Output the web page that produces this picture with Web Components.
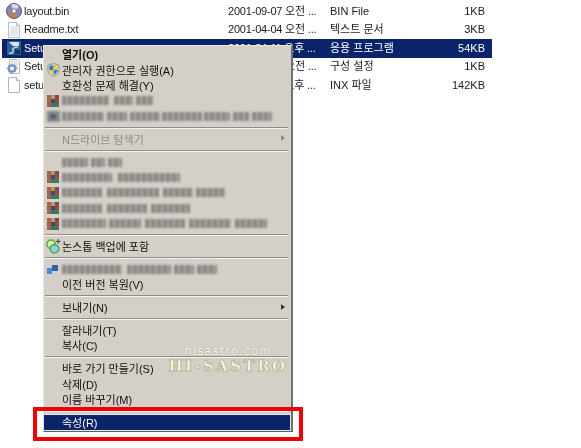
<!DOCTYPE html>
<html lang="ko">
<head>
<meta charset="utf-8">
<title>Setup context menu</title>
<style>
  html, body { margin: 0; background: #fff; }
  body { width: 581px; height: 448px; overflow: hidden; position: relative; font-family: "Liberation Sans", "Noto Sans CJK KR", sans-serif; }
</style>
</head>
<body>
<file-list>
  <file-row name="layout.bin" date="2001-09-07 오전 ..." type="BIN File" size="1KB" icon="disc"></file-row>
  <file-row name="Readme.txt" date="2001-04-04 오전 ..." type="텍스트 문서" size="3KB" icon="text"></file-row>
  <file-row name="Setu" date="2001-04-11 오후 ..." type="응용 프로그램" size="54KB" icon="exe" selected></file-row>
  <file-row name="Setu" date="2001-04-04 오전 ..." type="구성 설정" size="1KB" icon="ini"></file-row>
  <file-row name="setu" date="2001-04-11 오후 ..." type="INX 파일" size="142KB" icon="blank"></file-row>
</file-list>

<context-menu>
  <menu-item strong>열기(O)</menu-item>
  <menu-item icon="shield">관리자 권한으로 실행(A)</menu-item>
  <menu-item>호환성 문제 해결(Y)</menu-item>
  <menu-item icon="rar" blur="47,5,19,3,17"></menu-item>
  <menu-item icon="gray" blur="42,3,20,3,30,2,40,2,26,3,16,3,20"></menu-item>
  <menu-sep></menu-sep>
  <menu-item disabled arrow>N드라이브 탐색기</menu-item>
  <menu-sep></menu-sep>
  <menu-item blur="26,3,14,3,14"></menu-item>
  <menu-item icon="rar" blur="50,6,62"></menu-item>
  <menu-item icon="rar" blur="40,5,52,4,30,3,29"></menu-item>
  <menu-item icon="rar" blur="40,5,40,4,39"></menu-item>
  <menu-item icon="rar" blur="44,3,32,4,40,4,42,4,32"></menu-item>
  <menu-sep></menu-sep>
  <menu-item icon="nonstop">논스톱 백업에 포함</menu-item>
  <menu-sep></menu-sep>
  <menu-item icon="blue" blur="60,5,44,3,20,3,20"></menu-item>
  <menu-item>이전 버전 복원(V)</menu-item>
  <menu-sep></menu-sep>
  <menu-item arrow>보내기(N)</menu-item>
  <menu-sep></menu-sep>
  <menu-item>잘라내기(T)</menu-item>
  <menu-item>복사(C)</menu-item>
  <menu-sep></menu-sep>
  <menu-item>바로 가기 만들기(S)</menu-item>
  <menu-item>삭제(D)</menu-item>
  <menu-item>이름 바꾸기(M)</menu-item>
  <menu-sep></menu-sep>
  <menu-item active>속성(R)</menu-item>
</context-menu>

<site-watermark></site-watermark>
<red-callout></red-callout>

<script>
const ICONS = {
  disc: `<svg width="16" height="16" viewBox="0 0 16 16"><circle cx="8" cy="8" r="7.5" fill="#8f86b8" stroke="#55556a"/><path d="M8 8 2.5 12.5a7 7 0 0 0 8 1.8z" fill="#c9803c"/><path d="M8 8 13 3.5A7 7 0 0 0 5 1.7z" fill="#dcd8ee"/><circle cx="8" cy="8" r="2.2" fill="#fff" stroke="#777"/></svg>`,
  text: `<svg width="16" height="16" viewBox="0 0 16 16"><path d="M2.5.5h8l3 3v12h-11z" fill="#fff" stroke="#b4bcc6"/><path d="M4 5h8M4 7h8M4 9h8M4 11h8M4 13h8" stroke="#c4d0dc"/><path d="M10.5.5v3h3" fill="#e8ecf0" stroke="#b4bcc6"/></svg>`,
  exe: `<svg width="16" height="16" viewBox="0 0 16 16"><rect x="1" y="1" width="14" height="14" fill="#2c5f9a"/><path d="M3 2h10v4H7z" fill="#d9e6ee"/><path d="M3 13c3 1 5-1 4-3s2-3 5-3" fill="none" stroke="#a8dcec" stroke-width="1.5"/><path d="M9 10h5v4H9z" fill="#10305e"/></svg>`,
  ini: `<svg width="16" height="16" viewBox="0 0 16 16"><path d="M3.5.5h8l2 2v12h-10z" fill="#f8f8f8" stroke="#b4b8c4"/><path d="M5 3h6M8 5h4M10 7h2M11 9h1" stroke="#c4ccd8"/><circle cx="6" cy="9.5" r="3.2" fill="none" stroke="#6f93c4" stroke-width="2.2"/><path d="M6 4.5v2M6 12.500v2M1 9.500h2M9 9.500h2M2.500 6l1.500 1.500M8 11.500l1.500 1.500M2.500 13 4 11.500M8 7.500 9.500 6" stroke="#6f93c4" stroke-width="1.3"/></svg>`,
  blank: `<svg width="16" height="16" viewBox="0 0 16 16"><path d="M2.5.5h8l3 3v12h-11z" fill="#fff" stroke="#b0b6be"/><path d="M10.5.5v3h3" fill="#eee" stroke="#b0b6be"/></svg>`,
  shield: `<svg width="13" height="14" viewBox="0 0 14 15"><path d="M7 .5 13 2.5v5c0 3.500-3 6-6 7-3-1-6-3.500-6-7v-5z" fill="#d9d9d9" stroke="#8a8a8a"/><path d="M7 2v5.500H2.500V3.500z" fill="#2f78c8"/><path d="M7 2l4.500 1.500v4H7z" fill="#f2c83a"/><path d="M7 7.500h4.500c0 2.500-2 4.500-4.500 5.500z" fill="#2f78c8"/><path d="M7 7.500v5.500c-2.500-1-4.500-3-4.500-5.500z" fill="#f2c83a"/></svg>`,
  rar: `<svg width="12" height="12" viewBox="0 0 12 12" style="filter:blur(.7px)"><rect width="4" height="12" fill="#a8624a"/><rect x="4" width="4" height="4" fill="#b89a50"/><rect x="8" width="4" height="4" fill="#7c4a50"/><rect x="4" y="4" width="4" height="4" fill="#2e4f86"/><rect x="8" y="4" width="4" height="4" fill="#a8423c"/><rect x="4" y="8" width="8" height="4" fill="#3c7a5c"/></svg>`,
  gray: `<svg width="13" height="11" viewBox="0 0 13 11" style="filter:blur(.8px)"><rect width="13" height="11" fill="#8a8a8c"/><rect x="3" y="3" width="6" height="5" fill="#58606c"/></svg>`,
  nonstop: `<svg width="15" height="15" viewBox="0 0 16 16"><circle cx="5.5" cy="5.5" r="4.5" fill="#dcecb0" stroke="#5aa83a" stroke-width="1.6"/><circle cx="9" cy="10.5" r="4.5" fill="#8ed0ec" stroke="#4aa84a" stroke-width="1.6"/><path d="M13 0v5M10.500 2.500h5" stroke="#333"/></svg>`,
  blue: `<svg width="11" height="9" viewBox="0 0 11 9" style="filter:blur(.5px)"><path d="M0 3h5v6H0z" fill="#4a88d8"/><path d="M5 0h6v6H5z" fill="#2c62b8"/></svg>`
};

class FileList extends HTMLElement {
  constructor() {
    super();
    this.attachShadow({ mode: 'open' });
    this.shadowRoot.innerHTML = `
      <style>
        :host { display: flex; flex-direction: column; width: 490px; margin: 2px 0 0 2px; filter: blur(.35px); }
      </style>
      <slot></slot>`;
  }
}

class FileRow extends HTMLElement {
  constructor() {
    super();
    this.attachShadow({ mode: 'open' });
  }

  connectedCallback() {
    const get = (n) => this.getAttribute(n) || '';
    this.shadowRoot.innerHTML = `
      <style>
        :host {
          display: grid;
          grid-template-columns: 22px 204px 102px 84px 74px;
          height: 18.5px;
          align-items: center;
          font-size: 11px;
          line-height: 15px;
          color: #1a1a1a;
          white-space: nowrap;
        }
        :host([selected]) { background: #0a246a; color: #fff; }
        .icon { display: flex; padding-left: 4px; }
        .tight { letter-spacing: -.2px; }
        .size { text-align: right; padding-right: 3px; }
      </style>
      <span class="icon">${ICONS[get('icon')] || ''}</span>
      <span class="tight">${get('name')}</span>
      <span class="tight">${get('date')}</span>
      <span>${get('type')}</span>
      <span class="size">${get('size')}</span>`;
  }
}

class ContextMenu extends HTMLElement {
  constructor() {
    super();
    this.attachShadow({ mode: 'open' });
    this.shadowRoot.innerHTML = `
      <style>
        :host {
          position: absolute;
          left: 43px;
          top: 45px;
          width: 250px;
          box-sizing: border-box;
          display: flex;
          flex-direction: column;
          padding: 1px 1px 1px 0;
          background: #d4d0c8;
          border: 1px solid;
          border-color: #e8e6e0 #707070 #606060 #e8e6e0;
          border-right-width: 2px;
          font-size: 11px;
          color: #111;
          filter: blur(.35px);
        }
      </style>
      <slot></slot>`;
  }
}

class MenuItem extends HTMLElement {
  constructor() {
    super();
    this.attachShadow({ mode: 'open' });
  }

  connectedCallback() {
    const icon = this.getAttribute('icon');
    const blur = this.getAttribute('blur');
    const bars = blur ? blur.split(',').map((w, i) =>
      `<i style="width:${w}px;opacity:${i % 2 ? 0 : 1}"></i>`).join('') : '';
    this.shadowRoot.innerHTML = `
      <style>
        :host {
          display: flex;
          align-items: center;
          height: 15.4px;
          line-height: 15px;
          flex: none;
          white-space: nowrap;
          position: relative;
        }
        :host([strong]) { font-weight: 700; }
        :host([disabled]) { color: #8d8b86; }
        :host([active]) { background: #0a246a; color: #fff; box-shadow: 0 0 0 1px #e8e6e0; }
        .icon { width: 18px; flex: none; display: flex; justify-content: flex-start; padding-left: 3px; box-sizing: border-box; }
        :host([icon="nonstop"]) .icon { padding-left: 2px; }
        .label { padding-top: 2px; }
        .bars { display: flex; height: 9px; filter: blur(1.3px); }
        .bars i { display: block; height: 9px; background: repeating-linear-gradient(90deg, #8b8985 0 4px, #aaa8a3 4px 6px); }
        .arrow { position: absolute; right: 5px; top: 4px; width: 0; height: 0; border-left: 4px solid #333; border-top: 3.5px solid transparent; border-bottom: 3.5px solid transparent; }
        :host([disabled]) .arrow { border-left-color: #8d8b86; }
      </style>
      <span class="icon">${icon ? ICONS[icon] : ''}</span>
      ${blur ? `<span class="bars">${bars}</span>` : '<span class="label"><slot></slot></span>'}
      ${this.hasAttribute('arrow') ? '<span class="arrow"></span>' : ''}`;
  }
}

class MenuSep extends HTMLElement {
  constructor() {
    super();
    this.attachShadow({ mode: 'open' });
    this.shadowRoot.innerHTML = `
      <style>
        :host { display: flex; flex-direction: column; justify-content: center; height: 7.5px; flex: none; margin: 0 2px 0 1px; }
        div { height: 1px; background: #8f8d88; border-bottom: 1px solid #f4f3f0; }
      </style>
      <div></div>`;
  }
}

class SiteWatermark extends HTMLElement {
  constructor() {
    super();
    this.attachShadow({ mode: 'open' });
    this.shadowRoot.innerHTML = `
      <style>
        :host { position: absolute; left: 162px; top: 344px; width: 132px; display: flex; flex-direction: column; align-items: center; color: #fbf8e8; pointer-events: none; }
        .site { font: 12px/14px "DejaVu Sans", sans-serif; letter-spacing: .9px; text-shadow: 0 0 1px #8c8870; }
        .logo { font: 700 15px/16px "DejaVu Serif", serif; letter-spacing: 2.4px; -webkit-text-stroke: .4px #a8a070; text-shadow: 0 0 1px #8c8660; }
      </style>
      <span class="site">hisastro.com</span>
      <span class="logo">HI-SASTRO</span>`;
  }
}

class RedCallout extends HTMLElement {
  constructor() {
    super();
    this.attachShadow({ mode: 'open' });
    this.shadowRoot.innerHTML = `
      <style>
        :host { position: absolute; left: 33px; top: 407px; width: 270px; height: 34px; box-sizing: border-box; border: 4px solid #f00000; pointer-events: none; }
      </style>`;
  }
}

customElements.define('file-list', FileList);
customElements.define('file-row', FileRow);
customElements.define('context-menu', ContextMenu);
customElements.define('menu-item', MenuItem);
customElements.define('menu-sep', MenuSep);
customElements.define('site-watermark', SiteWatermark);
customElements.define('red-callout', RedCallout);
</script>
</body>
</html>
